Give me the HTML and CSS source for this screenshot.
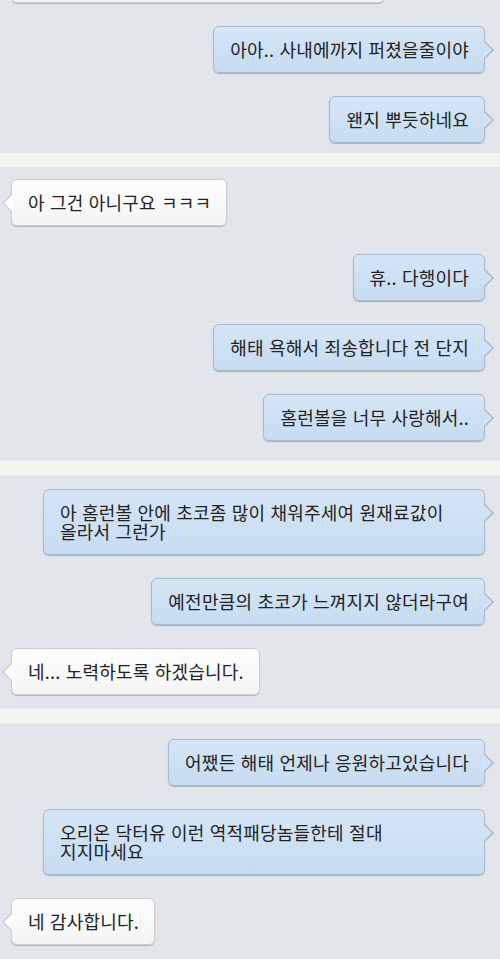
FILE: index.html
```html
<!DOCTYPE html>
<html lang="ko">
<head>
	<meta charset="UTF-8">
	<title>대화</title>
	<link rel="stylesheet" href="styles.css">
</head>
<body>
	<div class="chat">
		<section class="panel panel-top">
			<div class="msg you"><div class="bubble cut"></div></div>
			<div class="msg me"><div class="bubble">아아.. 사내에까지 퍼졌을줄이야</div></div>
			<div class="msg me"><div class="bubble">왠지 뿌듯하네요</div></div>
		</section>
		<div class="divider"></div>
		<section class="panel panel-2">
			<div class="msg you"><div class="bubble">아 그건 아니구요 ㅋㅋㅋ</div></div>
			<div class="msg me later"><div class="bubble">휴.. 다행이다</div></div>
			<div class="msg me"><div class="bubble">해태 욕해서 죄송합니다 전 단지</div></div>
			<div class="msg me"><div class="bubble">홈런볼을 너무 사랑해서..</div></div>
		</section>
		<div class="divider"></div>
		<section class="panel panel-3">
			<div class="msg me"><div class="bubble">아 홈런볼 안에 초코좀 많이 채워주세여 원재료값이 올라서 그런가</div></div>
			<div class="msg me"><div class="bubble">예전만큼의 초코가 느껴지지 않더라구여</div></div>
			<div class="msg you"><div class="bubble">네... 노력하도록 하겠습니다.</div></div>
		</section>
		<div class="divider"></div>
		<section class="panel panel-4">
			<div class="msg me"><div class="bubble">어쨌든 해태 언제나 응원하고있습니다</div></div>
			<div class="msg me"><div class="bubble">오리온 닥터유 이런 역적패당놈들한테 절대 지지마세요</div></div>
			<div class="msg you"><div class="bubble">네 감사합니다.</div></div>
		</section>
	</div>
</body>
</html>
```
FILE: styles.css
```css
*{ margin:0; padding:0; box-sizing:border-box;}
body{ background:#e3e7ec; font-family:"Noto Sans CJK KR","Noto Sans",sans-serif; color:#222; overflow:hidden;}
.chat{ width:500px; height:959px; overflow:hidden;}

.panel{ display:flex; flex-direction:column; gap:23px; padding:0 15px 0 11px;
	background:repeating-linear-gradient(180deg,#e3e7ec 0,#e3e7ec 2px,#e1e5eb 2px,#e1e5eb 4px);}
.panel-top{ padding-bottom:10px;}
.panel-2{ padding-top:12px; padding-bottom:20px;}
.panel-3{ padding-top:14px; padding-bottom:14px;}
.panel-4{ padding-top:16px; padding-bottom:14px;}
.divider{ height:14px; background:#f1f6ef;}

.msg{ display:flex;}
.msg.me{ justify-content:flex-end;}
.msg.you{ justify-content:flex-start;}
.msg.later{ margin-top:5px;}

.bubble{ position:relative; max-width:442px; padding:13px 15px 13px 16px; line-height:19px; font-size:18px; letter-spacing:0.2px;
	border-radius:6px; border:1px solid #a7bacd; word-break:keep-all;
	background:linear-gradient(180deg,#d5e6f7,#c7dcf1); box-shadow:0 1px 1px rgba(60,80,100,.35);}
.you .bubble{ border-color:#cdcdcd; background:linear-gradient(180deg,#fefefe,#f4f4f4); box-shadow:0 1px 1px rgba(0,0,0,.22);}
.bubble.cut{ width:373px; height:47px; margin-top:-44px;}

/* tails */
.bubble::before, .bubble::after{ content:""; position:absolute; width:0; height:0; border-style:solid; border-color:transparent;}
.me .bubble::before{ right:-10px; top:13px; border-width:10px 0 10px 10px; border-left-color:#a7bacd;}
.me .bubble::after{ right:-8px; top:14px; border-width:9px 0 9px 9px; border-left-color:#d0e2f4;}
.you .bubble::before{ left:-10px; top:13px; border-width:10px 10px 10px 0; border-right-color:#cdcdcd;}
.you .bubble::after{ left:-8px; top:14px; border-width:9px 9px 9px 0; border-right-color:#fcfcfc;}
.bubble.cut::before, .bubble.cut::after{ display:none;}
```
